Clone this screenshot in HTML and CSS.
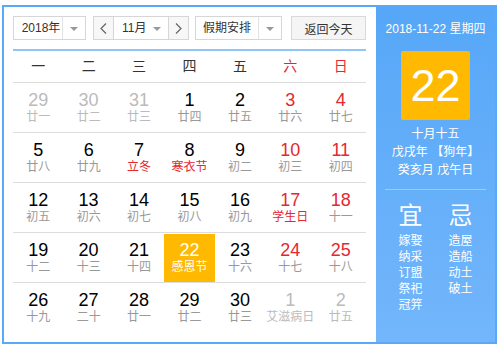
FILE: index.html
```html
<!DOCTYPE html>
<html lang="zh-CN">
<head>
  <meta charset="UTF-8">
  <title>万年历</title>
  <link rel="stylesheet" href="styles.css">
</head>
<body>
  <div class="calendar">
    <div class="main">
      <div class="toolbar">
        <div class="select year">
          <span class="select-text">2018年</span>
          <span class="select-arrow"></span>
        </div>
        <div class="month-group">
          <span class="nav-btn">
            <svg width="7" height="11" viewBox="0 0 7 11"><polyline points="6,0.5 1,5.5 6,10.5" fill="none" stroke="#666" stroke-width="1.2"/></svg>
          </span>
          <div class="select month">
            <span class="select-text">11月</span>
            <span class="select-arrow"></span>
          </div>
          <span class="nav-btn">
            <svg width="7" height="11" viewBox="0 0 7 11"><polyline points="1,0.5 6,5.5 1,10.5" fill="none" stroke="#666" stroke-width="1.2"/></svg>
          </span>
        </div>
        <div class="select holiday">
          <span class="select-text">假期安排</span>
          <span class="select-arrow"></span>
        </div>
        <button class="today-btn">返回今天</button>
      </div>

      <div class="weekdays">
        <span>一</span><span>二</span><span>三</span><span>四</span><span>五</span>
        <span class="weekend">六</span><span class="weekend">日</span>
      </div>

      <div class="days">
        <div class="day other"><b>29</b><i>廿一</i></div>
        <div class="day other"><b>30</b><i>廿二</i></div>
        <div class="day other"><b>31</b><i>廿三</i></div>
        <div class="day"><b>1</b><i>廿四</i></div>
        <div class="day"><b>2</b><i>廿五</i></div>
        <div class="day weekend"><b>3</b><i>廿六</i></div>
        <div class="day weekend"><b>4</b><i>廿七</i></div>

        <div class="day"><b>5</b><i>廿八</i></div>
        <div class="day"><b>6</b><i>廿九</i></div>
        <div class="day"><b>7</b><i class="fest">立冬</i></div>
        <div class="day"><b>8</b><i class="fest">寒衣节</i></div>
        <div class="day"><b>9</b><i>初二</i></div>
        <div class="day weekend"><b>10</b><i>初三</i></div>
        <div class="day weekend"><b>11</b><i>初四</i></div>

        <div class="day"><b>12</b><i>初五</i></div>
        <div class="day"><b>13</b><i>初六</i></div>
        <div class="day"><b>14</b><i>初七</i></div>
        <div class="day"><b>15</b><i>初八</i></div>
        <div class="day"><b>16</b><i>初九</i></div>
        <div class="day weekend"><b>17</b><i class="fest">学生日</i></div>
        <div class="day weekend"><b>18</b><i>十一</i></div>

        <div class="day"><b>19</b><i>十二</i></div>
        <div class="day"><b>20</b><i>十三</i></div>
        <div class="day"><b>21</b><i>十四</i></div>
        <div class="day today"><b>22</b><i>感恩节</i></div>
        <div class="day"><b>23</b><i>十六</i></div>
        <div class="day weekend"><b>24</b><i>十七</i></div>
        <div class="day weekend"><b>25</b><i>十八</i></div>

        <div class="day"><b>26</b><i>十九</i></div>
        <div class="day"><b>27</b><i>二十</i></div>
        <div class="day"><b>28</b><i>廿一</i></div>
        <div class="day"><b>29</b><i>廿二</i></div>
        <div class="day"><b>30</b><i>廿三</i></div>
        <div class="day other"><b>1</b><i>艾滋病日</i></div>
        <div class="day other"><b>2</b><i>廿五</i></div>
      </div>
    </div>

    <div class="side">
      <div class="side-date">2018-11-22 星期四</div>
      <div class="big-day">22</div>
      <div class="lunar">
        <p>十月十五</p>
        <p>戊戌年 【狗年】</p>
        <p>癸亥月 戊午日</p>
      </div>
      <div class="divider"></div>
      <div class="almanac">
        <div class="almanac-col">
          <h2>宜</h2>
          <p>嫁娶</p><p>纳采</p><p>订盟</p><p>祭祀</p><p>冠笄</p>
        </div>
        <div class="almanac-col">
          <h2>忌</h2>
          <p>造屋</p><p>造船</p><p>动土</p><p>破土</p>
        </div>
      </div>
    </div>
  </div>
</body>
</html>
```

FILE: styles.css
```css
body {
  margin: 0;
  background: #fff;
  font-family: "Liberation Sans", "Noto Sans CJK SC", sans-serif;
  color: #333;
}
.calendar {
  display: flex;
  width: 495px;
  height: 339px;
  margin: 5px 0 0 2px;
  border: 2px solid #5aa9f8;
  box-sizing: border-box;
}
.main {
  width: 372px;
  padding: 9px 10px 0 9px;
  box-sizing: border-box;
}
.toolbar {
  display: flex;
  height: 24px;
  padding-bottom: 9px;
  border-bottom: 2px solid #8ec5fb;
}
.select {
  display: flex;
  height: 24px;
  border: 1px solid #d6d6d6;
  box-sizing: border-box;
  background: #fff;
  font-size: 12px;
  line-height: 22px;
  white-space: nowrap;
}
.select-text {
  flex: 1;
  text-align: center;
}
.select-arrow {
  position: relative;
  flex: none;
  width: 22px;
  border-left: 1px solid #e2e2e2;
}
.select-arrow::after {
  content: "";
  position: absolute;
  left: 7px;
  top: 10px;
  border-left: 4px solid transparent;
  border-right: 4px solid transparent;
  border-top: 4px solid #999;
}
.year { width: 73px; }
.year .select-text { padding-left: 6px; }
.month-group {
  display: flex;
  width: 96px;
  margin-left: 7px;
}
.nav-btn {
  display: flex;
  flex: none;
  align-items: center;
  justify-content: center;
  width: 21px;
  height: 24px;
  border: 1px solid #d6d6d6;
  box-sizing: border-box;
  background: #f7f7f7;
}
.month {
  flex: 1;
  border-left: none;
  border-right: none;
}
.month .select-text { padding-left: 8px; }
.month .select-arrow { border-left: none; }
.holiday {
  width: 87px;
  margin-left: 6px;
}
.today-btn {
  width: 75px;
  height: 24px;
  margin-left: 9px;
  padding: 0;
  border: 1px solid #d9d9d9;
  background: #f5f5f5;
  font-family: inherit;
  font-size: 12px;
  color: #333;
}
.weekdays {
  display: grid;
  grid-template-columns: repeat(7, 1fr);
  height: 31px;
  line-height: 31px;
  border-bottom: 1px solid #ddd;
  text-align: center;
  font-size: 14px;
  color: #333;
}
.weekdays .weekend { color: #e5282f; }
.days {
  display: grid;
  grid-template-columns: repeat(7, 1fr);
  grid-auto-rows: 50px;
}
.days .day:nth-child(n+29) { border-bottom: none; }
.day {
  display: flex;
  flex-direction: column;
  align-items: center;
  padding-top: 7px;
  border-bottom: 1px solid #ddd;
  box-sizing: border-box;
}
.day b {
  font-weight: normal;
  font-size: 18px;
  line-height: 20px;
  color: #000;
}
.day i {
  font-style: normal;
  font-size: 12px;
  line-height: 15px;
  color: #999;
  white-space: nowrap;
}
.day.weekend b { color: #e5282f; }
.day i.fest { color: #e5282f; }
.day.other b,
.day.other i { color: #bbb; }
.day.today {
  background: #ffb900;
  margin-top: 1px;
  padding-top: 6px;
}
.day.today b,
.day.today i { color: #fff; }
.side {
  flex: 1;
  display: flex;
  flex-direction: column;
  align-items: center;
  padding-top: 15px;
  background: linear-gradient(#56a7f8, #73b6fb);
  color: #fff;
}
.side-date {
  font-size: 12px;
  line-height: 14px;
}
.big-day {
  width: 69px;
  height: 69px;
  margin-top: 15px;
  background: #ffb900;
  border-radius: 2px;
  text-align: center;
  font-size: 45px;
  line-height: 69px;
}
.lunar {
  margin-top: 5px;
  text-align: center;
  font-size: 12px;
  line-height: 18px;
}
.lunar p { margin: 0; }
.divider {
  align-self: stretch;
  height: 1px;
  margin: 10px 9px 0;
  background: rgba(255, 255, 255, 0.35);
}
.almanac {
  display: flex;
  margin-top: 12px;
}
.almanac-col {
  width: 50px;
  text-align: center;
}
.almanac h2 {
  margin: 0 0 3px;
  font-weight: normal;
  font-size: 24px;
  line-height: 28px;
}
.almanac p {
  margin: 0;
  font-size: 12px;
  line-height: 16px;
}
```
